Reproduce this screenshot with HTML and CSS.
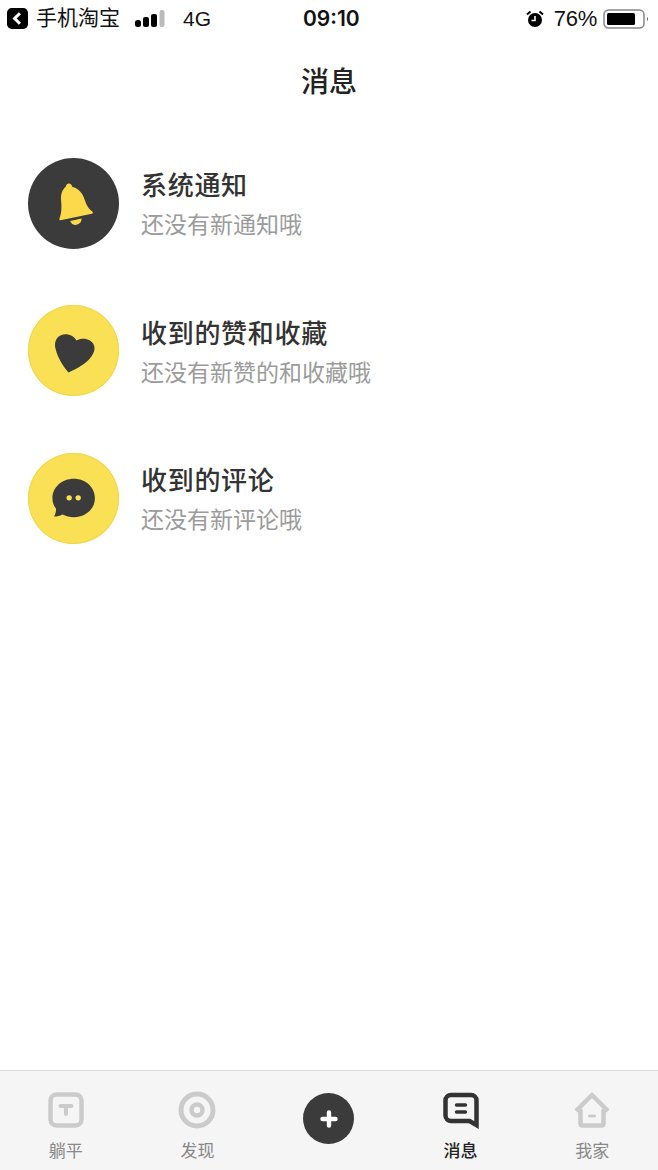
FILE: index.html
```html
<!DOCTYPE html>
<html lang="zh-CN">

<head>
    <meta charset="UTF-8">
    <title>消息</title>
    <link rel="stylesheet" href="styles.css">
</head>

<body>

    <div class="page">
        <div class="status-bar">
            <div class="status-left">
                <svg class="back-icon" viewBox="0 0 22 22" width="21" height="21">
                    <rect width="22" height="22" rx="5" fill="#000" />
                    <path d="M13.5 5.5 8 11l5.5 5.5" fill="none" stroke="#fff" stroke-width="3.2" />
                </svg>
                <span class="back-app">手机淘宝</span>
                <svg class="signal" viewBox="0 0 30 18" width="30" height="18">
                    <rect x="0" y="10" width="6" height="7" rx="2.5" fill="#000" />
                    <rect x="8" y="7" width="6" height="10" rx="2" fill="#000" />
                    <rect x="16" y="4" width="6" height="13" rx="2" fill="#000" />
                    <rect x="24.5" y="0" width="5" height="17" rx="2" fill="#bbb" />
                </svg>
                <span class="network">4G</span>
            </div>
            <div class="status-time">09:10</div>
            <div class="status-right">
                <svg class="alarm" viewBox="0 0 18 18" width="18" height="18">
                    <circle cx="9" cy="10" r="7" fill="#000" />
                    <path d="M9 6v4.5H5.5" fill="none" stroke="#fff" stroke-width="1.6" />
                    <path d="M1 4.5 4.5 1.5M17 4.5 13.5 1.5" stroke="#000" stroke-width="2" />
                </svg>
                <span class="percent">76%</span>
                <svg class="battery" viewBox="0 0 46 20" width="46" height="20">
                    <rect x="1" y="1" width="40" height="18" rx="4.5" fill="none" stroke="#888" stroke-width="1.5" />
                    <rect x="4" y="4" width="28" height="12" rx="1.5" fill="#000" />
                    <path d="M44 8c1.3.4 1.3 3.6 0 4z" fill="#666" />
                </svg>
            </div>
        </div>

        <h1 class="nav-title">消息</h1>

        <ul class="msg-list">
            <li class="msg-item">
                <svg class="msg-icon dark" viewBox="25 22 272 272">
                    <path d="M138 108C139 101 143 98 147 98 152 98 157 102 157 108 175 113 188 125 195 148 200 165 208 175 218 183 220 186 219 188 216 189L122 208C119 208 118 206 119 203 125 190 126 170 124 150 122 130 128 116 138 108Z" fill="#fcd94b" />
                    <path d="M151 210 185 203C186 213 178 221 168 222 160 222 153 217 151 210Z" fill="#fcd94b" />
                </svg>
                <div class="msg-text">
                    <div class="msg-title">系统通知</div>
                    <div class="msg-sub">还没有新通知哦</div>
                </div>
            </li>
            <li class="msg-item">
                <svg class="msg-icon yellow" viewBox="25 22 272 272">
                    <path d="M170 128C160 112 140 105 122 113 106 120 103 140 108 155 114 180 130 205 146 224 170 212 200 198 215 175 228 158 227 138 210 128 198 121 182 121 170 128Z" fill="#3b3b3b" />
                </svg>
                <div class="msg-text">
                    <div class="msg-title">收到的赞和收藏</div>
                    <div class="msg-sub">还没有新赞的和收藏哦</div>
                </div>
            </li>
            <li class="msg-item">
                <svg class="msg-icon yellow" viewBox="25 23 272 272">
                    <path d="M162 100C197 100 225 125 225 158 225 190 197 215 162 215 150 215 138 212 128 207 120 211 112 213 103 213 107 206 109 198 109 190 102 181 98 170 98 158 98 125 127 100 162 100Z" fill="#3b3b3b" />
                    <circle cx="148" cy="157" r="8" fill="#f9e055" />
                    <circle cx="175" cy="157" r="8" fill="#f9e055" />
                </svg>
                <div class="msg-text">
                    <div class="msg-title">收到的评论</div>
                    <div class="msg-sub">还没有新评论哦</div>
                </div>
            </li>
        </ul>

        <div class="tab-bar">
            <div class="tab">
                <svg viewBox="0 0 38 38" width="38" height="38">
                    <rect x="3.5" y="3.5" width="31" height="31" rx="6" fill="none" stroke="#cbcbcb" stroke-width="4.5" />
                    <path d="M13.5 15h11M19 15v8" fill="none" stroke="#cbcbcb" stroke-width="4" stroke-linecap="round" />
                </svg>
                <span>躺平</span>
            </div>
            <div class="tab">
                <svg viewBox="0 0 38 38" width="38" height="38">
                    <circle cx="19" cy="19" r="16" fill="none" stroke="#cbcbcb" stroke-width="5" />
                    <circle cx="19" cy="19" r="5.5" fill="none" stroke="#cbcbcb" stroke-width="4.5" />
                </svg>
                <span>发现</span>
            </div>
            <div class="tab">
                <div class="add-btn">
                    <svg viewBox="0 0 20 20" width="20" height="20">
                        <path d="M10 3.5v13M3.5 10h13" stroke="#fff" stroke-width="4.4" stroke-linecap="round" />
                    </svg>
                </div>
            </div>
            <div class="tab active">
                <svg viewBox="0 0 38 38" width="38" height="38">
                    <path d="M9 4h20c3 0 5.500 2.500 5.500 5.500v24.500l-7-4H9c-3 0-5.500-2.500-5.500-5.500V9.500C3.500 6.500 6 4 9 4z" fill="none" stroke="#333" stroke-width="4.5" />
                    <path d="M14.5 14h9M14.5 21h9" stroke="#333" stroke-width="3.4" stroke-linecap="round" />
                </svg>
                <span>消息</span>
            </div>
            <div class="tab">
                <svg viewBox="0 0 38 38" width="38" height="38">
                    <path d="M7.500 18v14.500c0 1.200.8 2 2 2h19c1.200 0 2-.8 2-2V18M3 20 19 4l16 16" fill="none" stroke="#cbcbcb" stroke-width="4.5" stroke-linejoin="round" />
                    <path d="M16.5 25h5" stroke="#cbcbcb" stroke-width="3" stroke-linecap="round" />
                </svg>
                <span>我家</span>
            </div>
        </div>
    </div>

</body>

</html>
```

FILE: styles.css
```css
* {
    box-sizing: border-box;
}

body {
    margin: 0;
    background: #fff;
    color: #333;
    font-family: "Liberation Sans", "Noto Sans CJK SC", sans-serif;
}

.page {
    height: 1170px;
    display: flex;
    flex-direction: column;
}

.status-bar {
    height: 37px;
    padding: 0 9px 0 7px;
    display: grid;
    grid-template-columns: 296px auto 1fr;
    align-items: center;
    color: #111;
}

.status-left,
.status-right {
    display: flex;
    align-items: center;
}

.status-right {
    justify-content: flex-end;
}

.back-app {
    margin: 0 0 5px 8px;
    font-size: 21px;
}

.signal {
    margin-left: 15px;
}

.network {
    margin-left: 18px;
    font-size: 21px;
}

.status-time {
    font-family: Inter, "Liberation Sans", sans-serif;
    font-size: 21px;
    font-weight: 600;
}

.percent {
    margin-left: 10px;
    font-size: 22px;
    letter-spacing: -0.3px;
}

.battery {
    margin-left: 6px;
}

.nav-title {
    margin: 25px 0 0;
    text-align: center;
    font-size: 28px;
    line-height: 42px;
    font-weight: 500;
    color: #222;
}

.msg-list {
    list-style: none;
    margin: 53.9px 0 0;
    padding: 0 0 0 28px;
    flex: 1;
    display: flex;
    flex-direction: column;
    gap: 56.5px;
}

.msg-item {
    display: flex;
    align-items: center;
    gap: 22px;
}

.msg-icon {
    width: 91px;
    height: 91px;
    border-radius: 50%;
}

.msg-icon.dark {
    background: #3b3b3b;
}

.msg-icon.yellow {
    background: #f9e055;
    box-shadow: inset 0 0 0 1px #f1d84c;
}

.msg-text {
    padding-top: 3px;
}

.msg-title {
    font-size: 26px;
    line-height: 36px;
    letter-spacing: 0.7px;
    font-weight: 500;
    color: #333;
}

.msg-sub {
    margin-top: 5px;
    font-size: 23px;
    line-height: 32px;
    color: #9b9b9b;
}

.tab-bar {
    height: 100px;
    display: grid;
    grid-template-columns: repeat(5, 1fr);
    background: #f5f5f6;
    border-top: 1px solid #d9d9d9;
}

.tab {
    padding-top: 20px;
    display: flex;
    flex-direction: column;
    align-items: center;
    gap: 12px;
    font-size: 17px;
    line-height: 22px;
    color: #888;
}

.tab.active {
    color: #222;
    font-weight: 500;
}

.add-btn {
    width: 51px;
    height: 51px;
    margin-top: 2px;
    border-radius: 50%;
    background: #3b3b3b;
    display: flex;
    align-items: center;
    justify-content: center;
}
```
